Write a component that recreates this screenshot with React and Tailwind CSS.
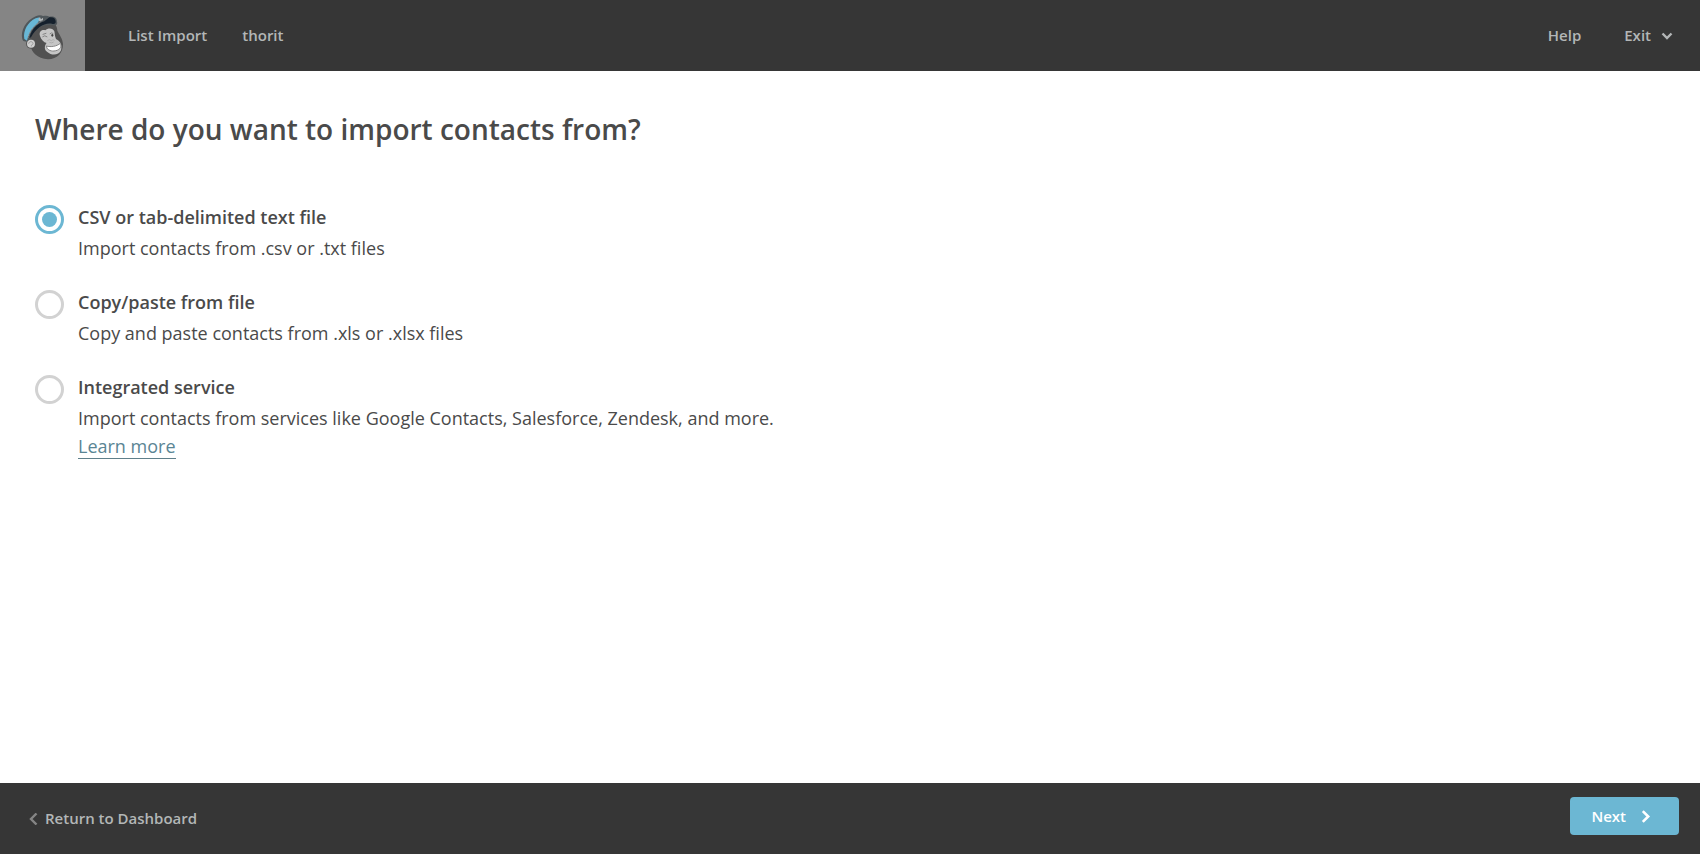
import { useState } from "react";

const OPTIONS = [
  {
    id: "csv",
    title: "CSV or tab-delimited text file",
    text: "Import contacts from .csv or .txt files",
  },
  {
    id: "paste",
    title: "Copy/paste from file",
    text: "Copy and paste contacts from .xls or .xlsx files",
  },
  {
    id: "service",
    title: "Integrated service",
    text: "Import contacts from services like Google Contacts, Salesforce, Zendesk, and more.",
    link: "Learn more",
  },
];

function Logo() {
  return (
    <svg viewBox="0 0 150 156" className="h-13 w-[50px]" aria-hidden="true">
      {/* head */}
      <path d="M31 85 C34 58 52 38 80 32 C105 28 118 45 118 62 C124 74 134 86 135 102 C135 130 118 147 90 148 C58 148 38 122 40 112 Z" fill="#515151" />
      {/* face */}
      <path d="M66 78 C62 66 70 58 82 61 C90 52 106 54 109 64 C111 72 110 78 114 87 C128 93 133 108 129 121 C122 137 100 137 88 126 C77 119 80 105 86 99 C77 97 69 89 66 78Z" fill="#c6c6c6" />
      {/* ear */}
      <circle cx="39" cy="101" r="15" fill="#555" />
      <circle cx="39" cy="101" r="12" fill="#d0d0d0" />
      <path d="M32 101 C33 93 45 93 45 101 C44 106 39 103 40 109" fill="none" stroke="#9a9a9a" strokeWidth="3" />
      {/* cap */}
      <path d="M13 88 C7 63 22 32 53 19 C61 15 70 14 75 18 C84 16 90 17 94 20 C107 17 117 22 117 35 C120 43 112 49 105 46 C97 44 90 45 83 46 C60 50 45 65 35 87 C29 96 16 98 13 88Z" fill="#50575b" />
      <path d="M19 87 C14 62 30 36 53 25 L65 22 C66 34 55 43 46 52 C37 61 31 75 27 92 Z" fill="#68b7d6" />
      <path d="M34 84 C40 60 56 41 79 34 L94 22 C105 20 113 25 113 34 C114 41 110 43 104 42 C82 36 57 50 39 82 Z" fill="#15202c" />
      <path d="M30 83 C36 60 51 44 71 33" fill="none" stroke="#9ba1a3" strokeWidth="3" strokeDasharray="3 2" />
      <path d="M61 28 L66 22 L69 28 L75 23 L75 31 L64 34Z" fill="#b4b8ba" />
      {/* eyes, nose */}
      <path d="M74 80 Q80 74 87 80 M75 73 L84 70 M96 71 Q101 66 105 70" fill="none" stroke="#858585" strokeWidth="3" strokeLinecap="round" />
      <ellipse cx="103" cy="76" rx="3" ry="4" fill="#444" />
      <path d="M88 92 Q94 86 100 92 Q105 86 110 91 M94 97 Q101 101 107 96" fill="none" stroke="#a2a2a2" strokeWidth="2" />
      {/* smile */}
      <path d="M85 108 C99 112 116 109 127 100 C133 112 123 122 108 123 C96 124 86 118 85 108Z" fill="#fff" stroke="#858585" strokeWidth="3" strokeLinejoin="round" />
    </svg>
  );
}

function Chevron({ points, className }) {
  return (
    <svg viewBox="0 0 12 12" className={className} fill="none" stroke="currentColor" strokeWidth="2.4" aria-hidden="true">
      <polyline points={points} />
    </svg>
  );
}

export default function App() {
  const [source, setSource] = useState("csv");

  return (
    <div className="flex min-h-screen flex-col bg-white font-['Open_Sans',sans-serif] text-[#4a4a4a]">
      <header className="flex h-[71px] items-center bg-[#363636] text-[15px] font-semibold text-[#b3b6b7]">
        <a href="#home" aria-label="Home" className="flex h-full w-[85px] items-center justify-center bg-[#858585]">
          <Logo />
        </a>
        <nav className="ml-[43px] flex gap-[35px]">
          <a href="#import">List Import</a>
          <a href="#list">thorit</a>
        </nav>
        <div className="mr-[27px] ml-auto flex items-center gap-[43px]">
          <a href="#help">Help</a>
          <button type="button" className="flex items-center gap-[10px]">
            Exit
            <Chevron points="1.5,3.5 6,8 10.5,3.5" className="size-3" />
          </button>
        </div>
      </header>

      <main className="grow px-[35px] pt-9">
        <h1 id="question" className="text-[28px] leading-11 font-semibold">
          Where do you want to import contacts from?
        </h1>
        <div role="radiogroup" aria-labelledby="question" className="mt-[51px] flex flex-col gap-6">
          {OPTIONS.map((option) => (
            <div key={option.id} className="flex gap-[14px]">
              <input
                type="radio"
                id={option.id}
                name="source"
                checked={source === option.id}
                onChange={() => setSource(option.id)}
                aria-describedby={option.id + "-text"}
                className="mt-[3px] grid size-[29px] shrink-0 appearance-none place-content-center rounded-full border-[3px] border-[#d2d2d2] before:size-[15px] before:rounded-full checked:border-[#6cb7d3] checked:before:bg-[#6cb7d3]"
              />
              <div className="text-[18px]">
                <label htmlFor={option.id} className="block leading-[31px] font-semibold">
                  {option.title}
                </label>
                <p id={option.id + "-text"} className="leading-[30px]">
                  {option.text}
                </p>
                {option.link && (
                  <a href="#learn" className="inline-block border-b border-[#5f7f8a] leading-6 text-[#5a8594]">
                    {option.link}
                  </a>
                )}
              </div>
            </div>
          ))}
        </div>
      </main>

      <footer className="flex h-[71px] items-center bg-[#363636] pr-[21px] pl-7 text-[15px] font-semibold">
        <a href="#dashboard" className="flex items-center gap-[5px] text-[#b3b6b7]">
          <Chevron points="8.5,0.5 3,6 8.5,11.5" className="size-3 text-[#858585]" />
          Return to Dashboard
        </a>
        <button type="button" className="mb-[5px] ml-auto flex h-[38px] items-center gap-[13px] rounded-[4px] bg-[#6cb7d3] pr-[27px] pl-[21px] text-white">
          Next
          <Chevron points="3.5,1 8.5,6 3.5,11" className="size-[13px]" />
        </button>
      </footer>
    </div>
  );
}
